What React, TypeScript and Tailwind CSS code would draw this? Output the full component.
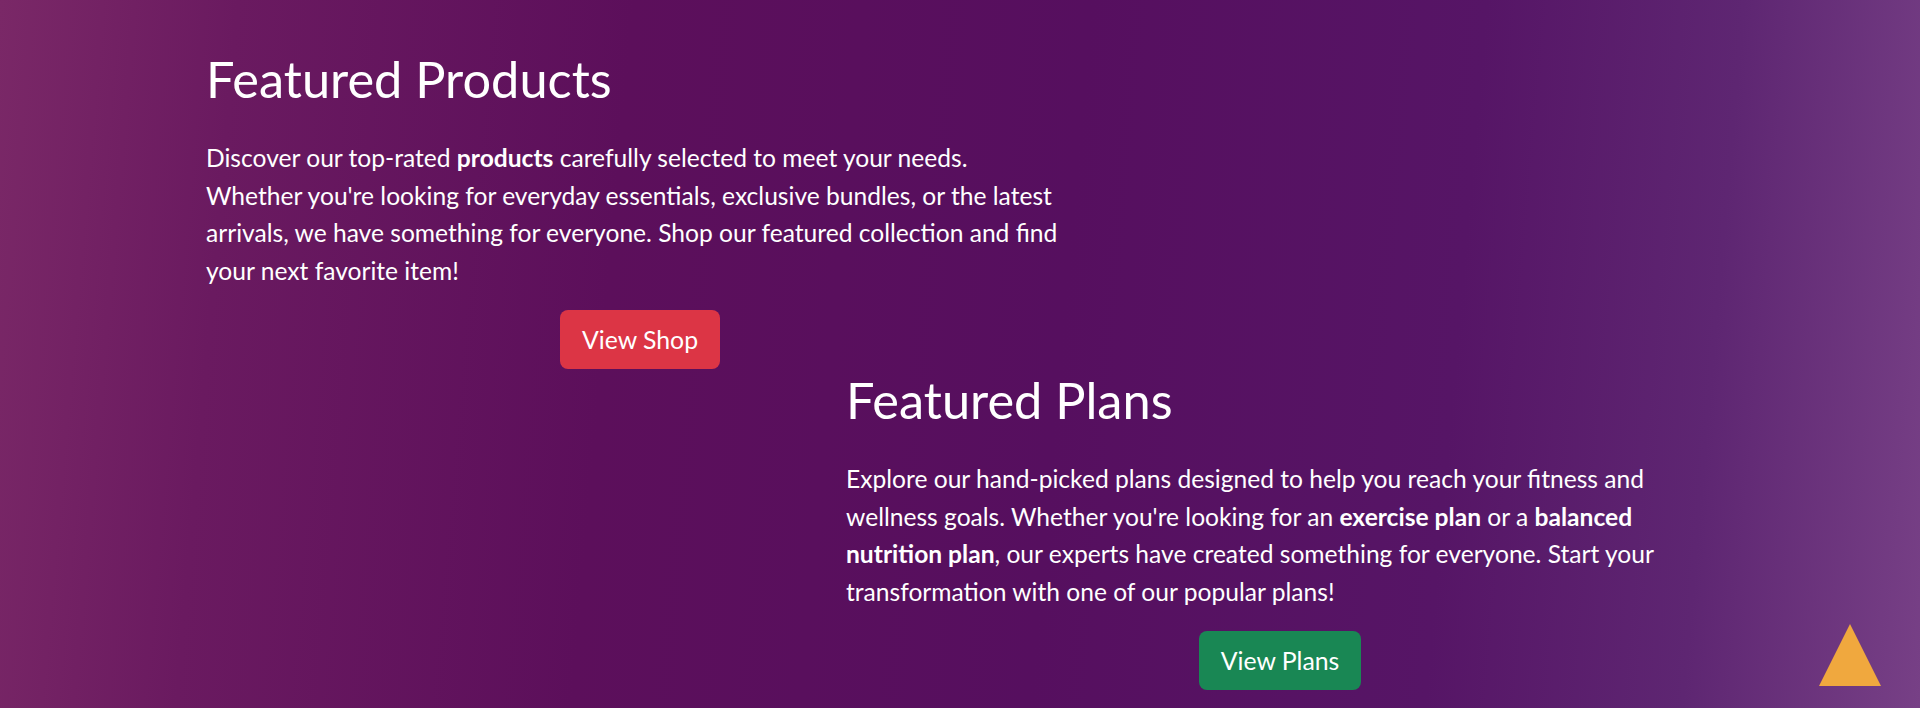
import React from "react";

const bg =
  "bg-[linear-gradient(95deg,#7a2867_0%,#6a1a60_12%,#5c0f5b_32%,#560f5f_55%,#561566_75%,#5e2672_88%,#774086_100%)]";

const FeatureBlock = ({
  title,
  children,
  button,
  buttonClass,
  className,
}: {
  title: string;
  children: React.ReactNode;
  button: string;
  buttonClass: string;
  className?: string;
}) => {
  return (
    <section className={`w-[862px] ${className ?? ""}`}>
      <h2 className="text-[50.5px] leading-[61px] font-normal">{title}</h2>
      <p className="mt-[30px] text-[24.6px] leading-[37.5px]">{children}</p>
      <div className="flex justify-center mt-[21px] pl-[6px]">
        <button
          className={`rounded-lg px-[22px] py-[11.5px] text-[24.8px] leading-[36px] text-white ${buttonClass}`}
        >
          {button}
        </button>
      </div>
    </section>
  );
};

export default function App() {
  return (
    <div
      className={`relative min-h-screen h-[708px] overflow-hidden text-white ${bg}`}
      style={{ fontFamily: "Lato, 'Open Sans', sans-serif" }}
    >
      <div className="mx-auto w-[1508px] pr-[6px] pt-[48px] flex flex-col">
        <FeatureBlock
          title="Featured Products"
          button="View Shop"
          buttonClass="bg-[#dc3545]"
        >
          Discover our top-rated <b>products</b> carefully selected to meet
          your needs.
          <br />
          Whether you're looking for everyday essentials, exclusive bundles, or
          the latest arrivals, we have something for everyone. Shop our
          featured collection and find your next favorite item!
        </FeatureBlock>
        <FeatureBlock
          title="Featured Plans"
          button="View Plans"
          buttonClass="bg-[#198754]"
          className="self-end"
        >
          Explore our hand-picked plans designed to help you reach your fitness
          and wellness goals. Whether you're looking for an{" "}
          <b>exercise plan</b> or a <b>balanced nutrition plan</b>, our experts
          have created something for everyone. Start your transformation with
          one of our popular plans!
        </FeatureBlock>
      </div>

      {/* back to top */}
      <button className="absolute right-[39px] bottom-[22px] w-[62px] h-[62px]" aria-label="Back to top">
        <svg viewBox="0 0 62 62" width="62" height="62">
          <polygon points="31,0 62,62 0,62" fill="#f0a83e" />
        </svg>
      </button>
    </div>
  );
}
